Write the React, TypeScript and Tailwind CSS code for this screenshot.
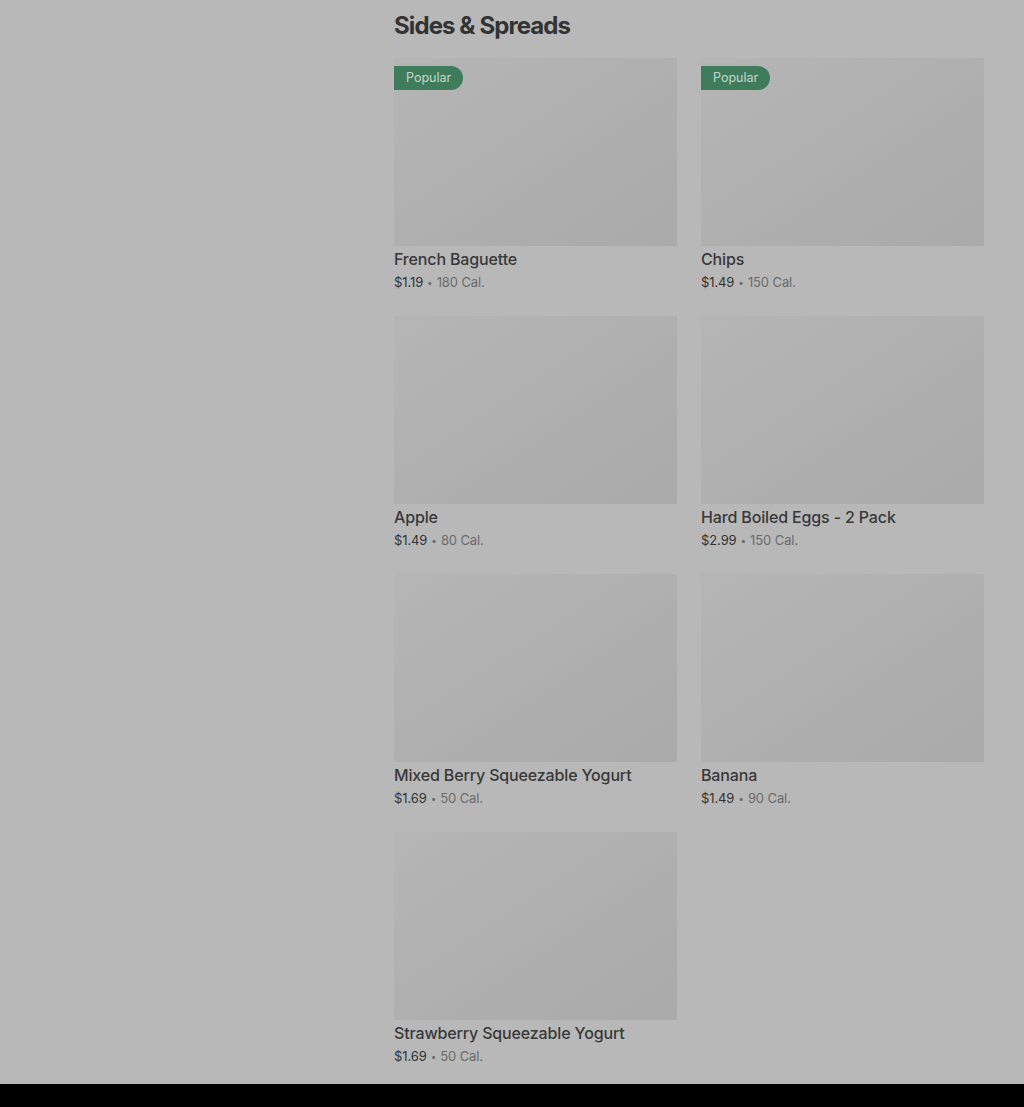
const items = [
  { name: 'French Baguette', price: '$1.19', cal: '180 Cal.', popular: true },
  { name: 'Chips', price: '$1.49', cal: '150 Cal.', popular: true },
  { name: 'Apple', price: '$1.49', cal: '80 Cal.' },
  { name: 'Hard Boiled Eggs - 2 Pack', price: '$2.99', cal: '150 Cal.' },
  { name: 'Mixed Berry Squeezable Yogurt', price: '$1.69', cal: '50 Cal.' },
  { name: 'Banana', price: '$1.49', cal: '90 Cal.' },
  { name: 'Strawberry Squeezable Yogurt', price: '$1.69', cal: '50 Cal.' },
];

function ItemCard({ name, price, cal, popular }: { name: string; price: string; cal: string; popular?: boolean }) {
  return (
    <div className="flex flex-col">
      <div className="relative h-[188px] bg-gradient-to-br from-[#b5b5b5] to-[#aaaaaa]">
        {popular && (
          <span className="absolute left-0 top-2 h-6 pl-3 pr-3 flex items-center rounded-r-full bg-[#3f7c5c] text-[#c6d6cc] text-[12.5px] leading-none">
            Popular
          </span>
        )}
      </div>
      <div className="mt-[3px] h-5 text-[16px] leading-5 font-medium tracking-[-0.15px] text-[#383838]">{name}</div>
      <div className="mt-[3px] h-5 flex items-center gap-1 text-[13px] leading-5 tracking-[-0.1px]">
        <span className="text-[#333333]">{price}</span>
        <span className="text-[#6b6b6b] text-[10px] leading-none">•</span>
        <span className="text-[#6b6b6b]">{cal}</span>
      </div>
    </div>
  );
}

export default function App() {
  return (
    <div className="w-[1024px] h-[1107px] bg-black" style={{ fontFamily: 'Inter, "Liberation Sans", sans-serif' }}>
      <div className="h-[1084px] bg-[#b8b8b8] pl-[394px] pr-[40px]">
        <h2 className="pt-[10px] mb-[16px] text-[24px] leading-8 font-bold tracking-[-0.9px] text-[#333333]">
          Sides &amp; Spreads
        </h2>
        <div className="grid grid-cols-2 gap-x-6 gap-y-6">
          {items.map(item => (
            <ItemCard key={item.name} {...item} />
          ))}
        </div>
      </div>
    </div>
  );
}
